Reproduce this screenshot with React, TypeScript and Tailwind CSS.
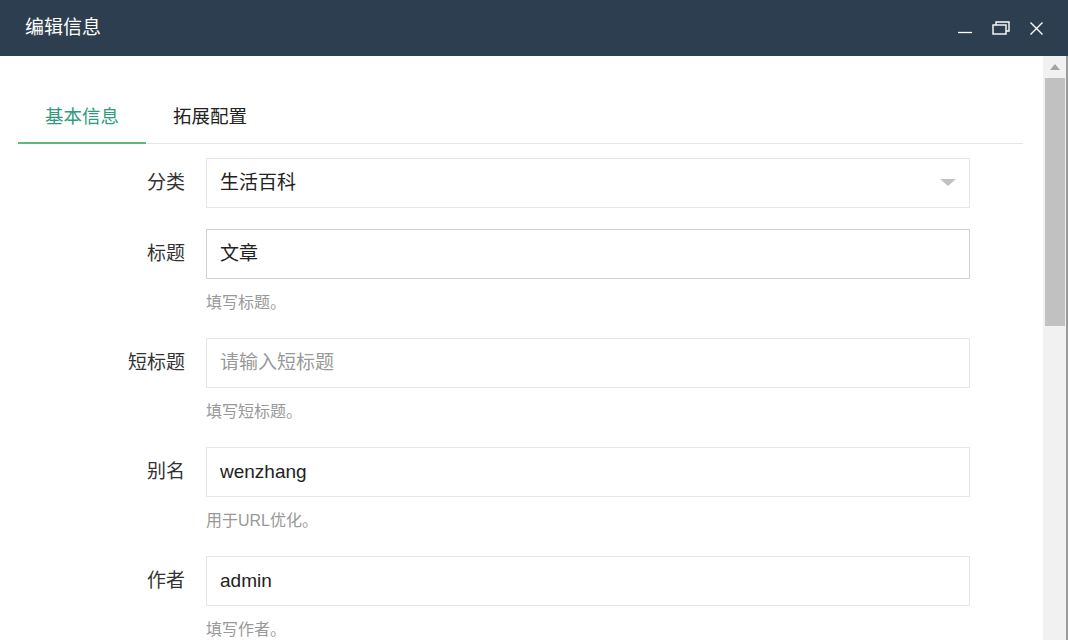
const font = "font-['Liberation_Sans','Noto_Sans_CJK_SC',sans-serif]";

type Field = {
  label: string;
  value?: string;
  placeholder?: string;
  help?: string;
  select?: boolean;
  active?: boolean;
};

const fields: Field[] = [
  { label: "分类", value: "生活百科", select: true },
  { label: "标题", value: "文章", help: "填写标题。", active: true },
  { label: "短标题", placeholder: "请输入短标题", help: "填写短标题。" },
  { label: "别名", value: "wenzhang", help: "用于URL优化。" },
  { label: "作者", value: "admin", help: "填写作者。" },
];

function WindowControls() {
  return (
    <div className="flex items-center gap-[19px] text-white">
      <svg width="16" height="16" viewBox="0 0 16 16">
        <path d="M1 12.5h14" stroke="currentColor" strokeWidth="1.3" />
      </svg>
      <svg width="18" height="16" viewBox="0 0 18 16">
        <rect x="1" y="5" width="13" height="9" fill="none" stroke="currentColor" strokeWidth="1.4" />
        <path d="M4 5V2h13v9h-3" fill="none" stroke="currentColor" strokeWidth="1.4" />
      </svg>
      <svg width="15" height="15" viewBox="0 0 15 15">
        <path d="M1.5 1.5l12 12M13.5 1.5l-12 12" stroke="currentColor" strokeWidth="1.4" />
      </svg>
    </div>
  );
}

function FormRow({ field }: { field: Field }) {
  return (
    <div className={field.help ? "mb-[25px]" : "mb-[21px]"}>
      <div className="flex items-center">
        <label className="w-[167px] text-right text-[19px] text-[#333]">{field.label}</label>
        <div
          className={`ml-[21px] w-[764px] h-[50px] flex items-center justify-between pl-[13px] pr-[13px] border bg-white ${
            field.active ? "border-[#d2d2d2]" : "border-[#e6e6e6]"
          }`}
        >
          {field.value ? (
            <span className="text-[19px] text-[#222]">{field.value}</span>
          ) : (
            <span className="text-[19px] text-[#999]">{field.placeholder}</span>
          )}
          {field.select && (
            <svg width="16" height="8" viewBox="0 0 16 8">
              <path d="M0 0h16L8 7z" fill="#c2c2c2" />
            </svg>
          )}
        </div>
      </div>
      {field.help && (
        <div className="ml-[188px] mt-[14px] leading-[20px] text-[16px] text-[#999]">{field.help}</div>
      )}
    </div>
  );
}

export default function App() {
  return (
    <div className={`w-[1068px] h-[640px] overflow-hidden flex flex-col bg-white ${font}`}>
      <div className="h-[56px] shrink-0 bg-[#2d3e50] flex items-center justify-between pl-[25px] pr-[24px]">
        <span className="text-[19px] text-white">编辑信息</span>
        <WindowControls />
      </div>
      <div className="flex flex-1 min-h-0">
        <div className="flex-1 pl-[18px] pr-[20px] pt-[34px] overflow-hidden">
          <div className="flex h-[54px] border-b border-[#e6e6e6]">
            <div className="relative px-[27px] text-[18.5px] leading-[53px] text-[#2e9a80]">
              基本信息
              <div className="absolute left-0 right-0 bottom-[-1px] h-[2px] bg-[#5fb878]" />
            </div>
            <div className="px-[27px] text-[18.5px] leading-[53px] text-[#222]">拓展配置</div>
          </div>
          <div className="pt-[14px]">
            {fields.map((f) => (
              <FormRow key={f.label} field={f} />
            ))}
          </div>
        </div>
        <div className="w-[25px] shrink-0 flex">
          <div className="flex-1 bg-[#f1f1f1] flex flex-col items-center">
            <div className="h-[22px] flex items-center justify-center">
              <svg width="10" height="6" viewBox="0 0 10 6">
                <path d="M0 6L5 0l5 6z" fill="#a3a3a3" />
              </svg>
            </div>
            <div className="w-[20px] h-[248px] bg-[#c1c1c1]" />
          </div>
          <div className="w-[2px] bg-[#9a9a9a]" />
        </div>
      </div>
    </div>
  );
}
